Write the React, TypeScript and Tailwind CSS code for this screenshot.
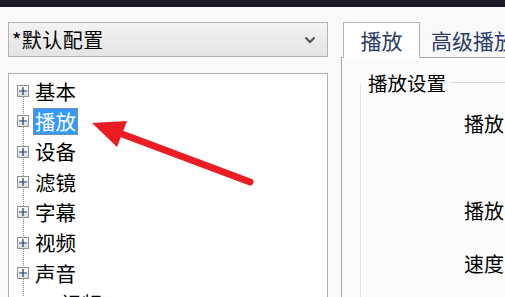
const cjk = "font-['Microsoft_YaHei','Noto_Sans_CJK_SC',sans-serif]";

const treeItems = ['基本', '播放', '设备', '滤镜', '字幕', '视频', '声音', '3D视频'];

function ExpandBox() {
  return (
    <div className="relative z-10 flex h-[12px] w-[12px] shrink-0 items-center justify-center border border-[#919191] bg-gradient-to-b from-[#ffffff] to-[#dcdcdc]">
      <svg width="10" height="10" viewBox="0 0 10 10">
        <path d="M1 5h8M5 1v8" stroke="#1f3a68" strokeWidth="1.2" />
      </svg>
    </div>
  );
}

export default function App() {
  return (
    <div className={`relative h-[297px] w-[505px] overflow-hidden bg-[#f9f9f9] text-black ${cjk}`}>
      <div className="h-[7px] bg-[#1b1c27]" />
      <div className="flex pl-[8px] pt-[15px]">
        {/* left column */}
        <div className="w-[320px] shrink-0">
          <div className="flex h-[35px] items-center justify-between border border-[#b3b3b3] bg-gradient-to-b from-[#f3f3f3] to-[#e4e4e4] pl-[3px] pr-[11px]">
            <span className="text-[20px] leading-none tracking-[0.5px]">*默认配置</span>
            <svg width="12" height="8" viewBox="0 0 12 8">
              <path d="M1.5 1.5L6 6l4.5-4.5" fill="none" stroke="#555" strokeWidth="2.2" />
            </svg>
          </div>
          <div className="relative mt-[16px] h-[240px] border border-[#b0b0b0] bg-white pt-[2px]">
            <div className="absolute left-[14px] top-[22px] bottom-0 border-l border-dotted border-[#8a8a8a]" />
            {treeItems.map((item, i) => (
              <div key={item} className="flex h-[30.3px] items-center pl-[8px]">
                <ExpandBox />
                {i === 1 ? (
                  <span className="ml-[4px] flex h-[27px] items-center border border-dotted border-[#c08040] bg-[#3399ff] px-[1px] text-[20.5px] leading-none text-white">
                    {item}
                  </span>
                ) : (
                  <span className="ml-[6px] text-[20.5px] leading-none">{item}</span>
                )}
              </div>
            ))}
          </div>
        </div>

        {/* right column */}
        <div className="ml-[13px] flex-1">
          <div className="flex h-[35px] items-end">
            <div className="relative z-10 -mb-px ml-[2px] flex h-[36px] w-[77px] items-center justify-center border border-b-0 border-[#adb6c8] bg-white text-[21px] leading-none text-[#2a3c66]">
              播放
            </div>
            <div className="flex h-[33px] items-center whitespace-nowrap pl-[11px] text-[21px] leading-none text-[#2a3c66]">
              高级播放
            </div>
          </div>
          <div className="h-[240px] border-l border-t border-[#a8a8a8] bg-[#fcfcfc] pl-[18px] pt-[15px]">
            <div className="flex items-center">
              <span className="pl-[8px] pr-[4px] text-[19.5px] leading-none">播放设置</span>
              <div className="h-px flex-1 bg-[#dcdcdc]" />
            </div>
            <div className="-mt-[10px] h-[230px] border-l border-[#e2e2e2] pl-[103px] text-[20px] leading-none">
              <div className="pt-[31px]">播放</div>
              <div className="pt-[67px]">播放</div>
              <div className="pt-[33px]">速度</div>
            </div>
          </div>
        </div>
      </div>

      <svg className="pointer-events-none absolute left-0 top-0" width="505" height="297" viewBox="0 0 505 297">
        <line x1="250" y1="182" x2="122" y2="134" stroke="#ec1c24" strokeWidth="7" strokeLinecap="round" />
        <polygon points="92,123 127,121 117,147" fill="#ec1c24" />
      </svg>
    </div>
  );
}
